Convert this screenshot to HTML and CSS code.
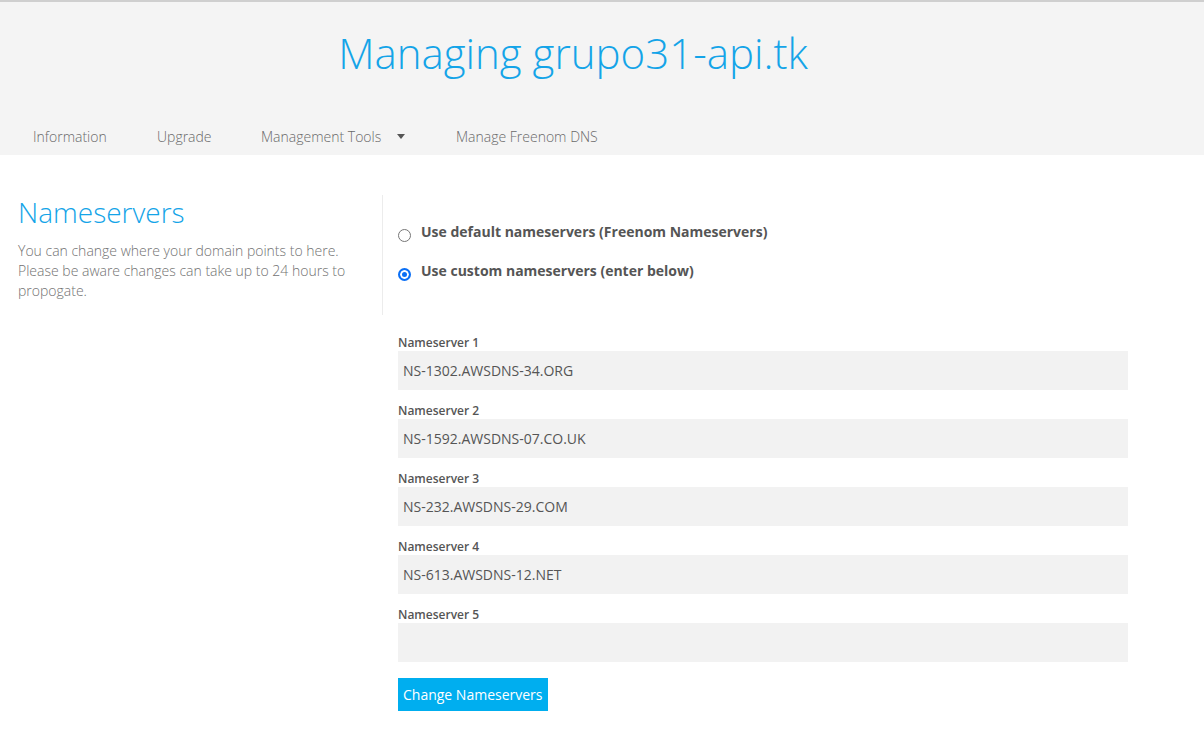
FILE: index.html
```html
<!DOCTYPE html>
<html>
<head>
<meta charset="utf-8">
<link rel="stylesheet" href="styles.css">
</head>
<body>
<header class="header">
  <h1 class="title">Managing grupo31-api.tk</h1>
  <nav class="nav">
    <a class="nav-item">Information</a>
    <a class="nav-item">Upgrade</a>
    <a class="nav-item">Management Tools <span class="caret"></span></a>
    <a class="nav-item">Manage Freenom DNS</a>
  </nav>
</header>
<main class="main">
  <section class="intro">
    <h2 class="intro-title">Nameservers</h2>
    <p class="intro-text">You can change where your domain points to here. Please be aware changes can take up to 24 hours to propogate.</p>
  </section>
  <section class="content">
    <div class="choices">
      <label class="choice"><span class="radio"></span>Use default nameservers (Freenom Nameservers)</label>
      <label class="choice"><span class="radio checked"></span>Use custom nameservers (enter below)</label>
    </div>
    <form class="fields">
      <div class="field"><div class="label">Nameserver 1</div><div class="input">NS-1302.AWSDNS-34.ORG</div></div>
      <div class="field"><div class="label">Nameserver 2</div><div class="input">NS-1592.AWSDNS-07.CO.UK</div></div>
      <div class="field"><div class="label">Nameserver 3</div><div class="input">NS-232.AWSDNS-29.COM</div></div>
      <div class="field"><div class="label">Nameserver 4</div><div class="input">NS-613.AWSDNS-12.NET</div></div>
      <div class="field"><div class="label">Nameserver 5</div><div class="input"></div></div>
      <div class="actions"><span class="button">Change Nameservers</span></div>
    </form>
  </section>
</main>
</body>
</html>
```
FILE: styles.css
```css
* { box-sizing: border-box; }
html, body { margin: 0; padding: 0; background: #fff; }
body { font-family: "Open Sans", "Liberation Sans", sans-serif; color: #555; }

.header {
  background: #f4f4f4;
  border-top: 2px solid #cfcfcf;
  height: 155px;
  display: flex;
  flex-direction: column;
}
.title {
  margin: 0;
  padding: 23px 58px 0 0;
  text-align: center;
  font-weight: 300;
  font-size: 42px;
  line-height: 56px;
  color: #14a4e8;
}
.nav {
  margin-top: auto;
  display: flex;
  height: 38px;
  align-items: center;
  padding-left: 33px;
}
.nav-item {
  font-size: 14px;
  font-weight: 300;
  color: #6a6a6a;
  display: flex;
  align-items: center;
}
.nav-item:nth-child(1) { width: 124px; }
.nav-item:nth-child(2) { width: 104px; }
.nav-item:nth-child(3) { width: 195px; }
.caret {
  display: inline-block;
  width: 0; height: 0;
  border-left: 4px solid transparent;
  border-right: 4px solid transparent;
  border-top: 5px solid #555;
  margin-left: 16px;
  margin-top: 1px;
}

.main {
  display: flex;
  padding-top: 40px;
}
.intro {
  width: 383px;
  padding: 0 20px 14px 18px;
  border-right: 1px solid #ececec;
  align-self: flex-start;
}
.intro-title {
  margin: 0;
  font-weight: 300;
  font-size: 28px;
  line-height: 34px;
  color: #14a4e8;
}
.intro-text {
  margin: 12px 0 0;
  font-size: 14px;
  font-weight: 300;
  line-height: 20px;
  color: #727272;
}
.content {
  padding: 0 0 0 15px;
  width: 745px;
}
.choices {
  padding-top: 27px;
  display: flex;
  flex-direction: column;
  gap: 19px;
}
.choice {
  display: flex;
  align-items: center;
  font-weight: 700;
  font-size: 14px;
  line-height: 20px;
  color: #555;
}
.radio {
  width: 13px; height: 13px;
  border: 1px solid #767676;
  border-radius: 50%;
  margin: 6px 10px 0 0;
  background: #fff;
}
.radio.checked {
  border: 2px solid #0a6ff5;
  background: #0a6ff5;
  box-shadow: inset 0 0 0 2px #fff;
}
.fields {
  margin-top: 54px;
  display: flex;
  flex-direction: column;
}
.field { margin-bottom: 13px; }
.label {
  font-size: 12px;
  font-weight: 600;
  line-height: 15px;
  color: #555;
  margin-bottom: 1px;
}
.input {
  height: 39px;
  background: #f2f2f2;
  font-size: 14px;
  line-height: 39px;
  padding-left: 5px;
  color: #555;
}
.actions { margin-top: 3px; }
.button {
  display: inline-block;
  background: #00aeef;
  color: #fff;
  font-size: 14px;
  line-height: 33px;
  height: 33px;
  padding: 0 5px;
}
```
